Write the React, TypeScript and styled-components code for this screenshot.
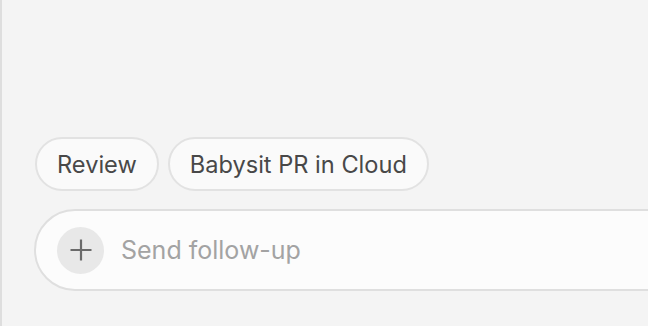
import React from "react";
import styled, { createGlobalStyle } from "styled-components";

const Global = createGlobalStyle`
  html, body { margin: 0; padding: 0; background: #f4f4f4; }
  body { font-family: Inter, "Noto Sans", sans-serif; }
`;

const Page = styled.div`
  width: 648px;
  height: 326px;
  box-sizing: border-box;
  border-left: 2px solid #dedede;
  background: #f4f4f4;
  overflow: hidden;
  display: flex;
  flex-direction: column;
  justify-content: flex-end;
  padding: 0 0 35px 32px;
`;

const Chips = styled.div`
  display: flex;
  gap: 9px;
  margin: 0 0 18px 1px;
`;

const Chip = styled.button`
  box-sizing: border-box;
  height: 54px;
  padding: 0 20px;
  border: 2px solid #e2e2e2;
  border-radius: 27px;
  background: #fafafa;
  color: #484848;
  font-family: Inter, "Noto Sans", sans-serif;
  font-size: 23.6px;
  display: flex;
  align-items: center;
  cursor: pointer;
`;

const InputBar = styled.div`
  box-sizing: border-box;
  width: 700px;
  height: 82px;
  border: 2px solid #dfdfdf;
  border-radius: 41px;
  background: #fcfcfc;
  display: flex;
  align-items: center;
  padding-left: 21px;
  gap: 17px;
`;

const PlusButton = styled.div`
  width: 47px;
  height: 47px;
  border-radius: 50%;
  background: #e8e8e8;
  display: flex;
  align-items: center;
  justify-content: center;
  flex-shrink: 0;
`;

const Placeholder = styled.span`
  font-size: 25px;
  color: #a3a3a3;
`;

export default function App() {
  return (
    <>
      <Global />
      <Page>
        <Chips>
          <Chip>Review</Chip>
          <Chip>Babysit PR in Cloud</Chip>
        </Chips>
        <InputBar>
          <PlusButton>
            <svg width="24" height="24" viewBox="0 0 24 24">
              <path d="M12 1.5v21M1.5 12h21" stroke="#6a6a6a" strokeWidth="2.2" />
            </svg>
          </PlusButton>
          <Placeholder>Send follow-up</Placeholder>
        </InputBar>
      </Page>
    </>
  );
}
